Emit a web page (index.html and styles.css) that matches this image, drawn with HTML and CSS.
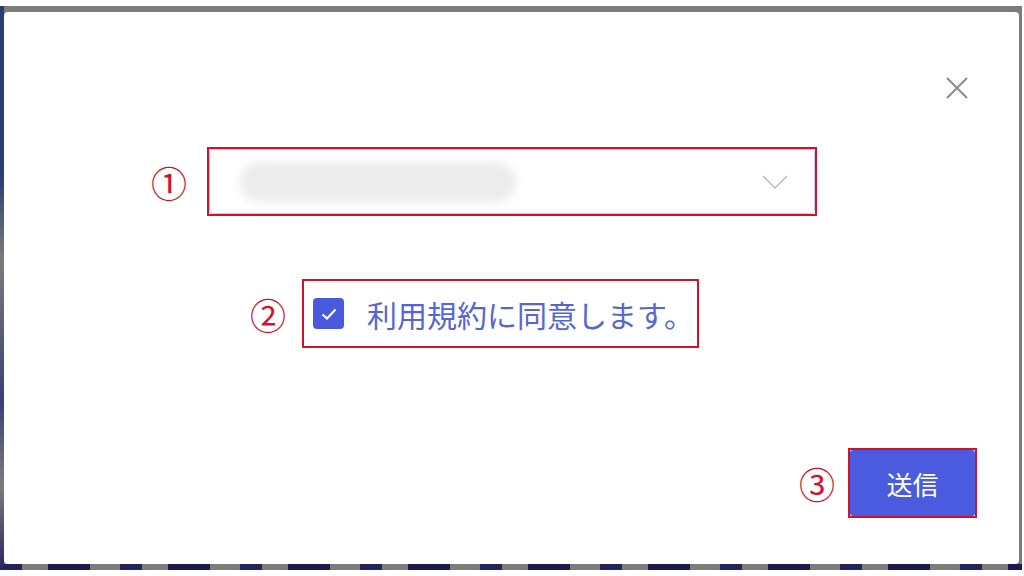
FILE: index.html
```html
<!DOCTYPE html>
<html lang="ja">

<head>
    <title>利用規約</title>
    <link rel="stylesheet" href="styles.css">
</head>

<body>

    <div class="backdrop">
        <div class="modal">
            <div class="modal-head">
                <button class="close-btn" aria-label="close">
                    <svg width="24" height="24" viewBox="0 0 24 24">
                        <path d="M2 2 L22 22 M22 2 L2 22" stroke="#8a8a8a" stroke-width="2" fill="none" />
                    </svg>
                </button>
            </div>

            <div class="row row-select">
                <span class="num">①</span>
                <div class="mark">
                    <div class="select">
                        <div class="blurred"></div>
                        <svg class="chevron" width="26" height="14" viewBox="0 0 26 14">
                            <path d="M1 1 L13 13 L25 1" stroke="#bdbdbd" stroke-width="1.5" fill="none" />
                        </svg>
                    </div>
                </div>
            </div>

            <div class="row row-agree">
                <span class="num">②</span>
                <div class="mark mark-agree">
                    <span class="checkbox">
                        <svg width="20" height="20" viewBox="0 0 20 20">
                            <path d="M3.5 10.5 L8 14.5 L16.5 5.5" stroke="#fff" stroke-width="2.2" fill="none" />
                        </svg>
                    </span>
                    <span class="agree-text">利用規約に同意します。</span>
                </div>
            </div>

            <div class="row row-submit">
                <span class="num">③</span>
                <div class="mark mark-btn">
                    <button class="submit-btn">送信</button>
                </div>
            </div>
        </div>
    </div>

</body>

</html>
```

FILE: styles.css
```css
html,
body {
    margin: 0;
    height: 100%;
    background-color: #fff;
}

body {
    font-family: "Noto Sans CJK JP", "Noto Sans", sans-serif;
}

.backdrop {
    box-sizing: border-box;
    height: 564px;
    margin: 6px 2px 0 0;
    padding: 6px 3px 0 4px;
    background-color: #7c7c7c;
    background-image: linear-gradient(180deg, #2a3d6e 0 30%, #7c7c7c 45%, #3a3f78 70%, #7c7c7c 85%, #2b2560 100%),
        repeating-linear-gradient(90deg, #23245c 0 22px, #7c7c7c 22px 48px, #1b1c4d 48px 90px, #7c7c7c 90px 120px);
    background-size: 4px 100%, 100% 6px;
    background-position: 0 0, 0 100%;
    background-repeat: no-repeat;
}

.modal {
    height: 552px;
    background-color: #fff;
    border-radius: 4px;
    display: flex;
    flex-direction: column;
}

.modal-head {
    box-sizing: border-box;
    height: 135px;
    display: flex;
    justify-content: flex-end;
    align-items: flex-start;
    padding: 64px 50px 0 0;
}

.close-btn {
    border: none;
    background: none;
    padding: 0;
    width: 24px;
    height: 24px;
    cursor: pointer;
}

.close-btn svg {
    display: block;
}

.row {
    display: flex;
    align-items: center;
}

.num {
    color: #d2122c;
    font-size: 36px;
    line-height: 1;
}

.mark {
    border: 2px solid #d2122c;
    box-sizing: border-box;
}

/* row 1 */
.row-select {
    height: 69px;
    padding-left: 147px;
}

.row-select .num {
    margin-right: 20px;
}

.row-select .mark {
    width: 610px;
    height: 69px;
}

.select {
    box-sizing: border-box;
    height: 100%;
    border: 1px solid #cdc6ec;
    border-radius: 4px;
    display: flex;
    align-items: center;
    justify-content: space-between;
    padding: 0 26px 0 30px;
}

.blurred {
    width: 276px;
    height: 40px;
    border-radius: 20px;
    background-color: #ececec;
    filter: blur(4px);
}

.chevron {
    display: block;
}

/* row 2 */
.row-agree {
    height: 69px;
    margin-top: 63px;
    padding-left: 246px;
}

.row-agree .num {
    margin-right: 16px;
}

.mark-agree {
    height: 69px;
    display: flex;
    align-items: center;
    padding: 0 3px 0 9px;
}

.checkbox {
    width: 31px;
    height: 31px;
    border-radius: 4px;
    background-color: #4a5ade;
    display: flex;
    align-items: center;
    justify-content: center;
}

.agree-text {
    margin-left: 23px;
    font-size: 30px;
    color: #5565d8;
    line-height: 1;
}

/* row 3 */
.row-submit {
    height: 70px;
    margin-top: 100px;
    justify-content: flex-end;
    padding-right: 42px;
}

.row-submit .num {
    margin-right: 13px;
}

.mark-btn {
    width: 129px;
    height: 70px;
}

.submit-btn {
    width: 100%;
    height: 100%;
    border: none;
    border-radius: 3px;
    background-color: #4a5be0;
    color: #fff;
    font-family: "Noto Sans CJK JP", sans-serif;
    font-size: 26px;
    cursor: pointer;
}
```
